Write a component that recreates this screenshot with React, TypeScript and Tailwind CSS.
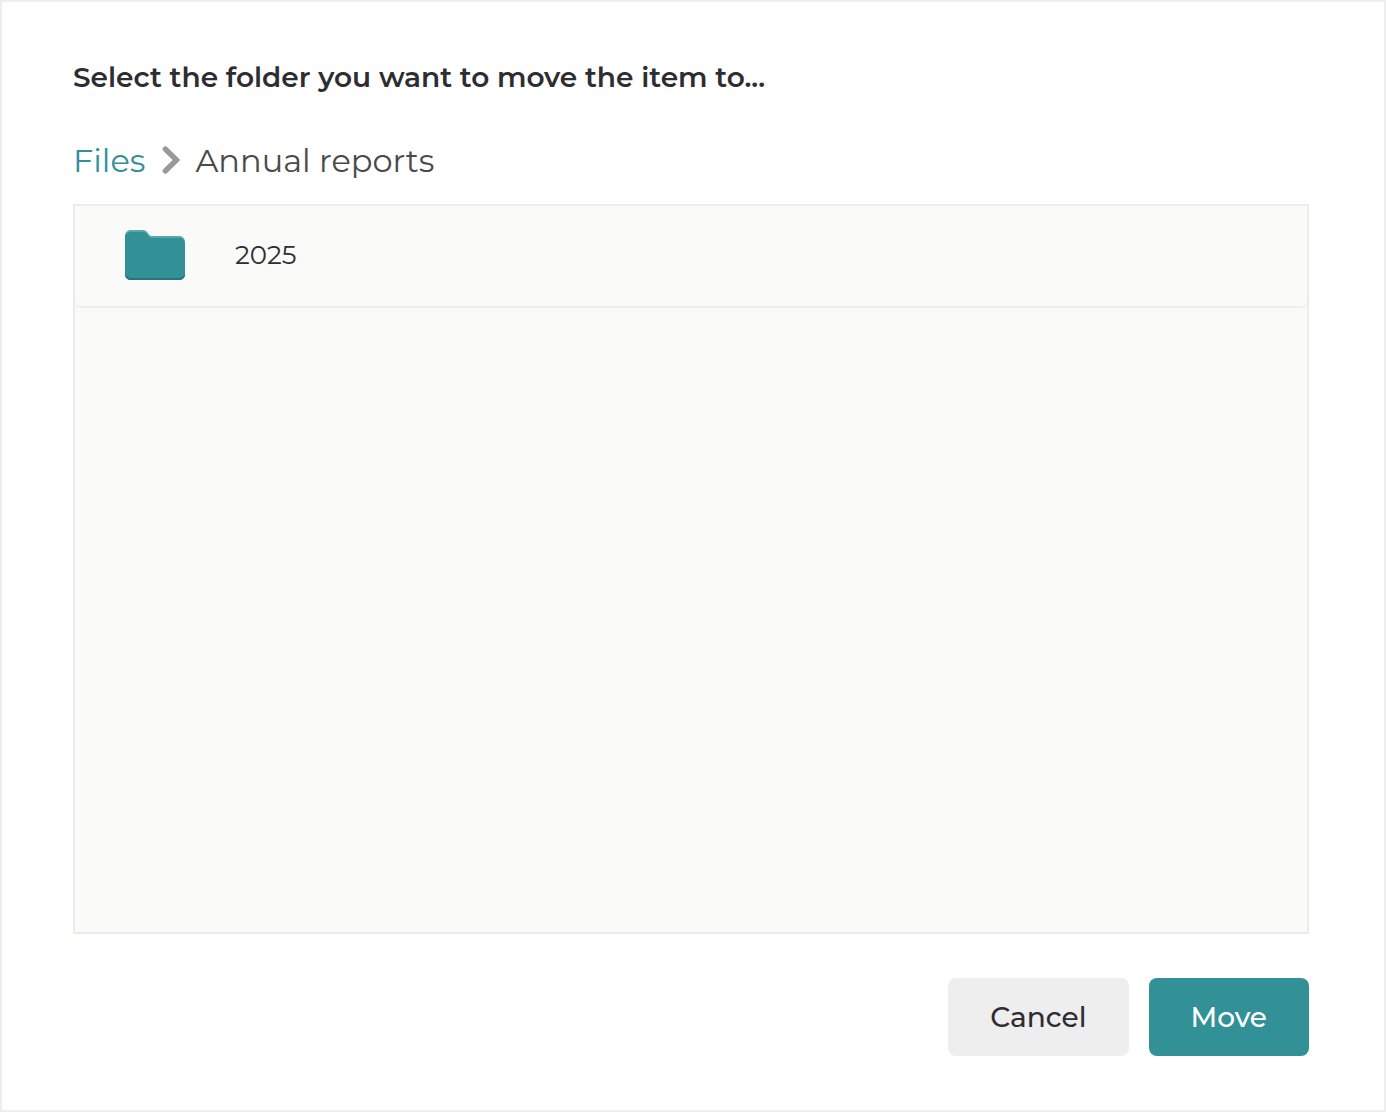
const folders = [{ name: "2025" }];

function FolderIcon() {
  return (
    <svg viewBox="0 0 60 50" className="w-[60px] h-[50px] shrink-0" aria-hidden="true">
      <defs>
        <clipPath id="folder-shape">
          <path d="M6 0H17.500C19.500 0 21 .8 22.200 2.300L24.200 4.800C25 5.700 25.800 6 27 6H54C57.500 6 60 8.500 60 12V44C60 47.500 57.500 50 54 50H6C2.500 50 0 47.500 0 44V6C0 2.500 2.500 0 6 0Z" />
        </clipPath>
      </defs>
      <g clipPath="url(#folder-shape)">
        <rect width="60" height="50" fill="#58a7ac" />
        <path
          d="M6 2H17.500C19.500 2 21 2.800 22.200 4.300L24.200 6.800C25 7.700 25.800 8 27 8H54C57.500 8 60 10.500 60 14V50H0V8C0 4.500 2.500 2 6 2Z"
          fill="#319197"
        />
        <path d="M0 42C0 45.500 2.500 48 6 48H54C57.500 48 60 45.500 60 42V50H0Z" fill="#267479" />
      </g>
    </svg>
  );
}

function Chevron() {
  return (
    <svg viewBox="0 0 20 30" className="w-5 h-[30px] shrink-0" fill="none" aria-hidden="true">
      <path d="M4.300 3L15.500 14L4.300 25" stroke="#999999" strokeWidth="5.300" strokeLinecap="round" strokeLinejoin="miter" />
    </svg>
  );
}

export default function App() {
  return (
    <main className="min-h-screen flex flex-col border-2 border-[#eeeeee] bg-white pl-[71px] pr-[75px] pt-14 pb-[54px] font-['Montserrat','Inter',sans-serif] text-[#2d2d32]">
      <h1 className="text-[28px] leading-[38px] font-semibold">Select the folder you want to move the item to...</h1>

      <nav aria-label="Breadcrumb" className="mt-[42px] mb-5">
        <ol className="flex items-center gap-4 text-[32px] leading-[46px]">
          <li>
            <a href="#files" className="text-[#319197]">Files</a>
          </li>
          <li className="flex items-center gap-3.5 text-[#4a4a4a]" aria-current="page">
            <Chevron />
            Annual reports
          </li>
        </ol>
      </nav>

      <ul className="flex-1 border-2 border-[#ecede6] bg-[#fafaf8]">
        {folders.map((folder) => (
          <li key={folder.name}>
            <button
              type="button"
              className="flex w-full items-center gap-[50px] rounded-md border-b-2 border-[#eeeeee] px-[50px] pt-6 pb-[26px] text-left text-[26px] leading-[50px]"
            >
              <FolderIcon />
              {folder.name}
            </button>
          </li>
        ))}
      </ul>

      <div className="mt-11 flex justify-end gap-5">
        <button type="button" className="rounded-lg bg-[#eeeeee] px-[42px] py-5 text-[28px] leading-[38px] font-medium">
          Cancel
        </button>
        <button type="button" className="rounded-lg bg-[#319197] px-[42px] py-5 text-[28px] leading-[38px] font-medium text-white">
          Move
        </button>
      </div>
    </main>
  );
}
